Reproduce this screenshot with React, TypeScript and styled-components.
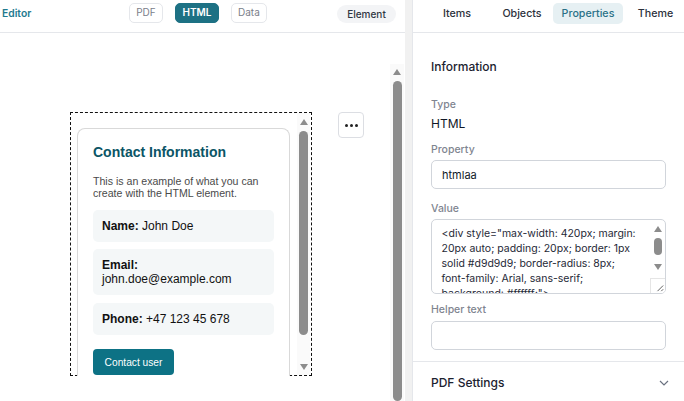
import React from "react";
import styled, { createGlobalStyle } from "styled-components";

const Global = createGlobalStyle`
  html, body { margin: 0; padding: 0; background: #fff; }
  * { box-sizing: border-box; }
  body { font-family: Inter, "Liberation Sans", sans-serif; }
`;

const Page = styled.div`
  width: 684px; height: 401px; display: flex; overflow: hidden; background: #fff;
`;
const LeftPane = styled.div`
  width: 405px; flex: none; display: flex; flex-direction: column;
`;
const Divider = styled.div`
  width: 8px; flex: none; background: #f1f1f1; border-right: 1px solid #e5e7eb;
`;
const RightPane = styled.div`
  flex: 1; min-width: 0; display: flex; flex-direction: column;
`;
const EditorBar = styled.div`
  height: 33px; flex: none; display: flex; align-items: center; position: relative;
  border-bottom: 1px solid #e5e7eb; padding: 0 9px 6px 2px;
`;
const EditorTitle = styled.div`
  font-size: 10.3px; font-weight: 600; color: #1f7a8f; width: 127px;
`;
const ModeGroup = styled.div`
  display: flex; gap: 12px; width: 208px;
`;
const ModeButton = styled.div<{ $active?: boolean }>`
  height: 20px; display: flex; align-items: center; justify-content: center;
  padding: 0 6px; border-radius: 5px; font-size: 10px; padding-bottom: 2px;
  min-width: ${p => (p.$active ? 44 : 34)}px;
  font-weight: ${p => (p.$active ? 600 : 400)};
  color: ${p => (p.$active ? "#fff" : "#7b808a")};
  background: ${p => (p.$active ? "#1d7184" : "#fff")};
  border: 1px solid ${p => (p.$active ? "#1d7184" : "#e5e7eb")};
`;
const ElementPill = styled.div`
  height: 18px; width: 59px; margin-top: 2px; border-radius: 9px; background: #f3f4f6;
  display: flex; align-items: center; justify-content: center; font-size: 10px; font-weight: 500; color: #303642;
`;
const CanvasArea = styled.div`
  flex: 1; min-height: 0; display: flex;
`;
const Canvas = styled.div`
  flex: 1; min-width: 0; padding: 79px 0 0 70px; display: flex; align-items: flex-start; gap: 26px;
`;
const Selection = styled.div`
  width: 242px; height: 264px; flex: none; border: 1px dashed #111; display: flex; align-items: flex-start;
  padding: 15px 0 0 6px;
`;
const Card = styled.div`
  width: 213px; height: 248px; margin-bottom: -1px; flex: none; position: relative;
  border: 1px solid #d9d9d9; border-bottom: 0; border-radius: 8px 8px 0 0;
  padding: 15px 15px 0; font-family: "Liberation Sans", Arial, sans-serif; background: #fff;
`;
const CardTitle = styled.h2`
  margin: 0 0 14px; font-size: 14px; line-height: 17px; font-weight: 700; color: #0b5566;
`;
const CardText = styled.p`
  margin: 0 0 11px; font-size: 10.6px; line-height: 12px; color: #4a4a4a;
`;
const InfoRow = styled.div`
  width: 181px; padding: 8.5px 9px; margin-bottom: 7.75px; background: #f4f7f8; border-radius: 5px;
  font-size: 12px; line-height: 14.5px; color: #111;
  b { font-weight: 700; }
`;
const ContactButton = styled.div`
  width: 81px; height: 26px; margin-top: 14.5px; border-radius: 4px; background: #0d7285; color: #fff;
  display: flex; align-items: center; justify-content: center; font-size: 10.2px;
`;
const ScrollTrack = styled.div<{ $width: number }>`
  width: ${p => p.$width}px; flex: none; background: #fafafa; display: flex; flex-direction: column; align-items: center;
`;
const ScrollThumb = styled.div<{ $w: number; $h?: number }>`
  width: ${p => p.$w}px; border-radius: ${p => p.$w / 2}px; background: #8c8c8c;
  ${p => (p.$h ? `height: ${p.$h}px; flex: none;` : "flex: 1;")}
`;
const ArrowUp = styled.div`
  width: 0; height: 0; flex: none; border-left: 4px solid transparent; border-right: 4px solid transparent;
  border-bottom: 6px solid #8c8c8c;
`;
const ArrowDown = styled(ArrowUp)`
  border-bottom: 0; border-top: 6px solid #8c8c8c;
`;
const InnerScroll = styled(ScrollTrack)`
  margin-left: 7px; margin-top: -15px; padding-top: 6px; height: 262px;
  ${ArrowUp} { margin-bottom: 6px; }
  ${ArrowDown} { margin-top: 29px; }
`;
const PageScroll = styled(ScrollTrack)`
  margin: 31px 1px 0 0; padding-top: 5px;
  ${ArrowUp} { margin-bottom: 6px; }
`;
const MenuButton = styled.div`
  width: 26px; height: 26px; flex: none; border: 1px solid #dcdee3; border-radius: 4px; background: #fff;
  display: flex; align-items: center; justify-content: center; gap: 2px;
`;
const Dot = styled.span`
  width: 3px; height: 3px; border-radius: 50%; background: #222;
`;
const Tabs = styled.div`
  height: 33px; flex: none; border-bottom: 1px solid #e5e7eb; display: flex; align-items: flex-start;
  padding: 3px 0 0 10px; font-size: 10.7px; font-weight: 500;
`;
const Tab = styled.div<{ $active?: boolean; $w: number }>`
  width: ${p => p.$w}px; height: 21px; flex: none; border-radius: 5px; display: flex; align-items: center; justify-content: center;
  color: ${p => (p.$active ? "#2a7187" : "#2b303b")};
  background: ${p => (p.$active ? "#e6f0f3" : "transparent")};
`;
const Body = styled.div`
  padding: 26px 18px 0; display: flex; flex-direction: column; flex: none;
`;
const SectionTitle = styled.div`
  font-size: 12px; line-height: 15px; font-weight: 500; color: #1c2230; margin-bottom: 24px;
`;
const FieldLabel = styled.div<{ $mb: number }>`
  font-size: 10.5px; line-height: 13px; color: #7f8590; font-weight: 500; margin-bottom: ${p => p.$mb}px;
`;
const Value = styled.div`
  font-size: 12px; line-height: 15px; color: #111827; margin-bottom: 12px;
`;
const TextBox = styled.div<{ $mb: number }>`
  width: 235px; height: 29px; flex: none; border: 1px solid #d1d5db; border-radius: 5px;
  display: flex; align-items: center; padding: 0 10px; font-size: 11px; color: #111827; margin-bottom: ${p => p.$mb}px;
`;
const CodeBox = styled.div`
  width: 235px; height: 75px; flex: none; border: 1px solid #d1d5db; border-radius: 5px; overflow: hidden;
  display: flex; margin-bottom: 9px; position: relative;
`;
const CodeText = styled.div`
  width: 218px; flex: none; padding: 5.5px 0 0 9.5px; font-size: 10.5px; line-height: 15px; color: #1f2937;
  white-space: pre;
`;
const CodeScroll = styled.div`
  flex: 1; display: flex; flex-direction: column; align-items: center; padding-top: 6px;
  ${ArrowUp} { margin-bottom: 6px; }
  ${ArrowDown} { margin-top: 9px; }
`;
const ResizeGrip = styled.svg`
  position: absolute; right: 0; bottom: 0; width: 15px; height: 15px; background: #fff;
  border-left: 1px solid #e5e5e5; border-top: 1px solid #e5e5e5;
`;
const AccordionRow = styled.div`
  margin-top: 11px; height: 44px; border-top: 1px solid #e5e7eb; flex: none;
  display: flex; align-items: center; justify-content: space-between; padding: 0 14px 2px 18px;
  font-size: 12px; font-weight: 500; color: #1c2230;
`;
const Chevron = styled.svg`
  width: 12px; height: 12px; color: #6b7280;
`;

export default function App() {
  return (
    <Page>
      <Global />
      <LeftPane>
        <EditorBar>
          <EditorTitle>Editor</EditorTitle>
          <ModeGroup>
            <ModeButton>PDF</ModeButton>
            <ModeButton $active>HTML</ModeButton>
            <ModeButton>Data</ModeButton>
          </ModeGroup>
          <ElementPill>Element</ElementPill>
        </EditorBar>
        <CanvasArea>
          <Canvas>
            <Selection>
              <Card>
                <CardTitle>Contact Information</CardTitle>
                <CardText>This is an example of what you can<br />create with the HTML element.</CardText>
                <InfoRow><b>Name:</b> John Doe</InfoRow>
                <InfoRow><b>Email:</b><br />john.doe@example.com</InfoRow>
                <InfoRow><b>Phone:</b> +47 123 45 678</InfoRow>
                <ContactButton>Contact user</ContactButton>
              </Card>
              <InnerScroll $width={13}>
                <ArrowUp />
                <ScrollThumb $w={9} $h={204} />
                <ArrowDown />
              </InnerScroll>
            </Selection>
            <MenuButton><Dot /><Dot /><Dot /></MenuButton>
          </Canvas>
          <PageScroll $width={14}>
            <ArrowUp />
            <ScrollThumb $w={9} />
          </PageScroll>
        </CanvasArea>
      </LeftPane>
      <Divider />
      <RightPane>
        <Tabs>
          <Tab $w={68}>Items</Tab>
          <Tab $w={62}>Objects</Tab>
          <Tab $w={70} $active>Properties</Tab>
          <Tab $w={65}>Theme</Tab>
        </Tabs>
        <Body>
          <SectionTitle>Information</SectionTitle>
          <FieldLabel $mb={5}>Type</FieldLabel>
          <Value>HTML</Value>
          <FieldLabel $mb={4}>Property</FieldLabel>
          <TextBox $mb={13}>htmlaa</TextBox>
          <FieldLabel $mb={4}>Value</FieldLabel>
          <CodeBox>
            <CodeText>{`<div style="max-width: 420px; margin:
20px auto; padding: 20px; border: 1px
solid #d9d9d9; border-radius: 8px;
font-family: Arial, sans-serif;
background: #ffffff;">`}</CodeText>
            <CodeScroll>
              <ArrowUp />
              <ScrollThumb $w={8} $h={17} />
              <ArrowDown />
            </CodeScroll>
            <ResizeGrip viewBox="0 0 15 15">
              <path d="M7 13 L13 7 M11 13 L13 11" stroke="#555" strokeWidth="1" fill="none" />
            </ResizeGrip>
          </CodeBox>
          <FieldLabel $mb={5}>Helper text</FieldLabel>
          <TextBox $mb={0} />
        </Body>
        <AccordionRow>
          PDF Settings
          <Chevron viewBox="0 0 12 12" fill="none">
            <path d="M2 4 L6 8 L10 4" stroke="currentColor" strokeWidth="1.2" />
          </Chevron>
        </AccordionRow>
      </RightPane>
    </Page>
  );
}
